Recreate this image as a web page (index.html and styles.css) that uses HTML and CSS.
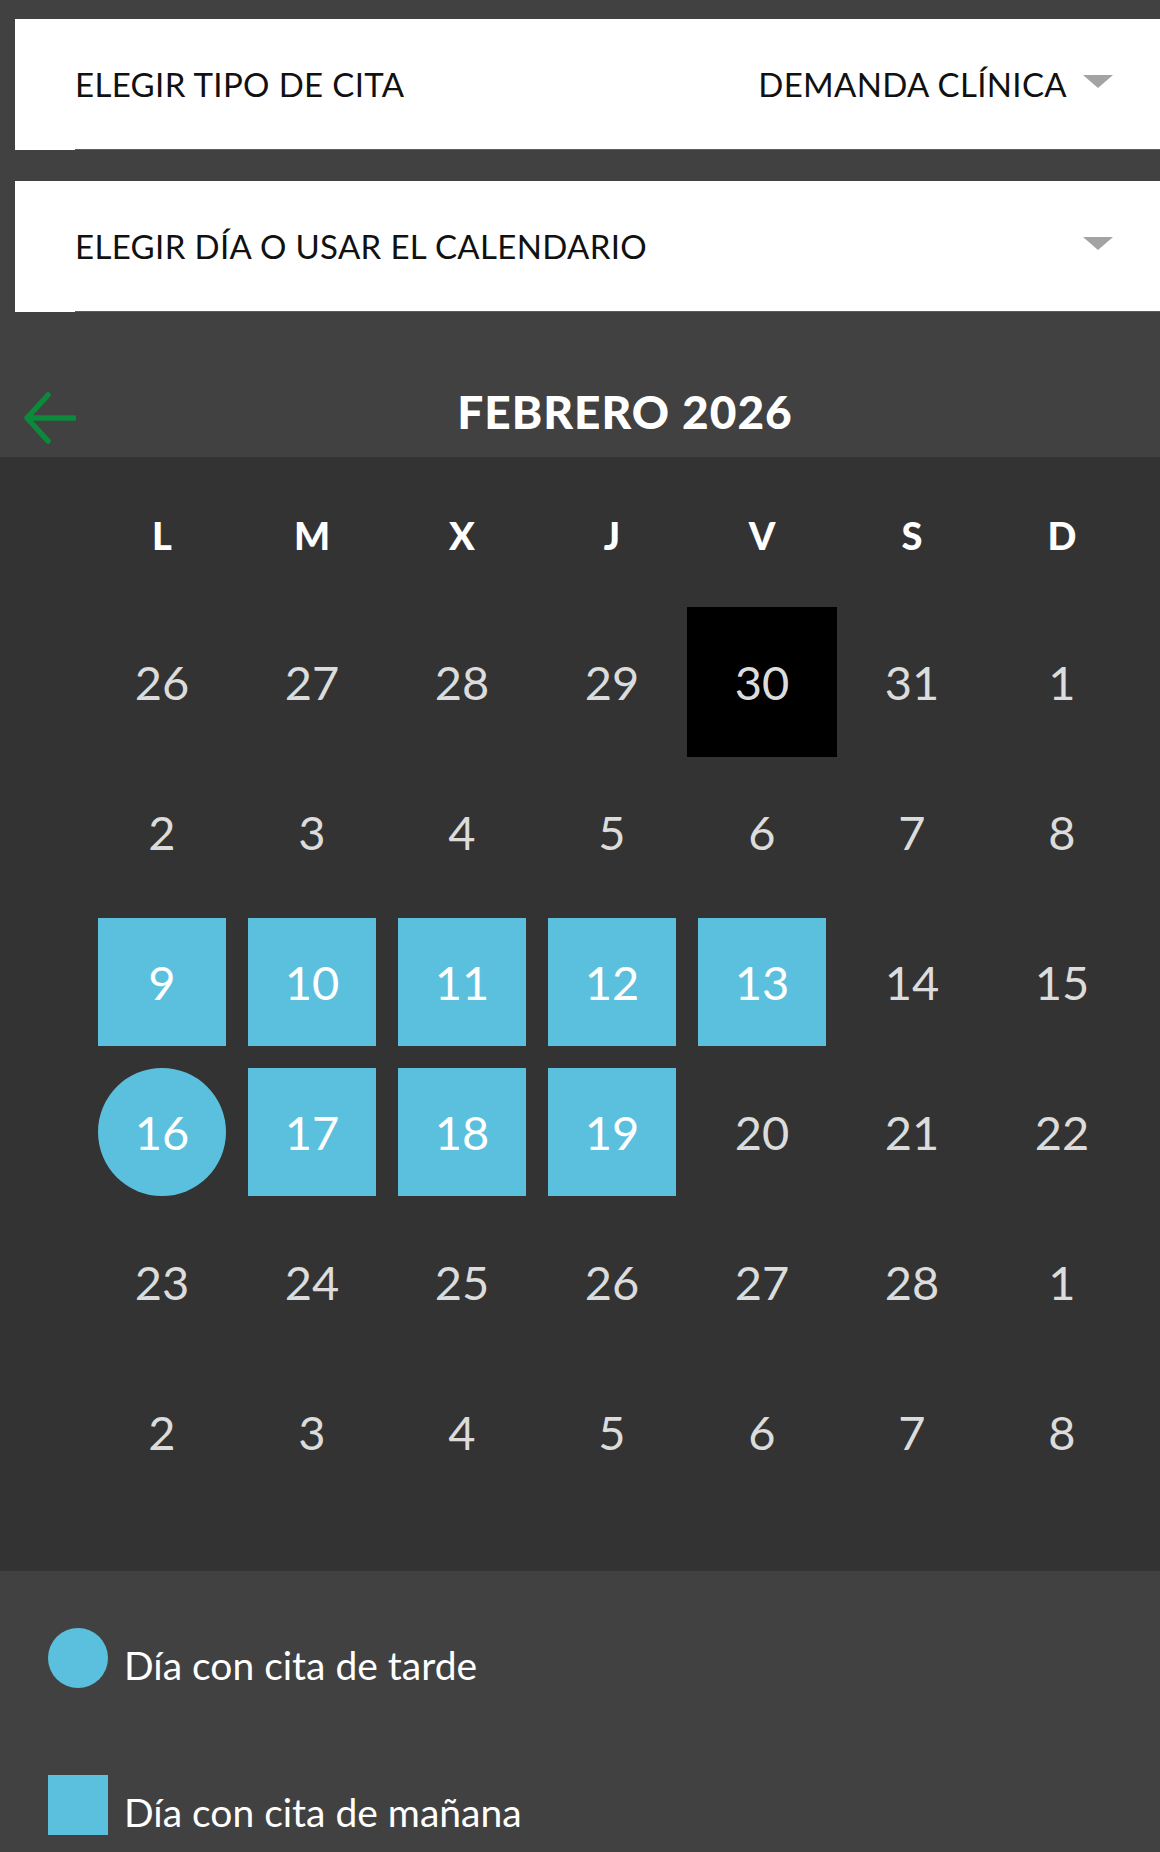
FILE: index.html
```html
<!DOCTYPE html>
<html lang="es">
<head>
    <meta charset="UTF-8">
    <meta name="viewport" content="width=device-width, initial-scale=1.0">
    <title>Pedir cita</title>
    <link rel="stylesheet" href="styles.css">
</head>
<body>
    <!-- Selectors -->
    <div class="select-card">
        <div class="select-inner">
            <span class="select-label">ELEGIR TIPO DE CITA</span>
            <span class="select-value">DEMANDA CLÍNICA</span>
            <span class="caret"></span>
        </div>
    </div>

    <div class="select-card">
        <div class="select-inner">
            <span class="select-label">ELEGIR DÍA O USAR EL CALENDARIO</span>
            <span class="select-value"></span>
            <span class="caret"></span>
        </div>
    </div>

    <!-- Month header -->
    <div class="month-bar">
        <a class="month-prev" href="#">
            <svg width="52" height="52" viewBox="0 0 52 52">
                <path d="M24 3 L3 26 L24 49 M3 26 L50 26" fill="none" stroke="#0b8a3b" stroke-width="5.5" stroke-linecap="round" stroke-linejoin="round"/>
            </svg>
        </a>
        <h2 class="month-title">FEBRERO 2026</h2>
    </div>

    <!-- Calendar -->
    <section class="calendar">
        <div class="cal-grid">
            <div class="wd">L</div>
            <div class="wd">M</div>
            <div class="wd">X</div>
            <div class="wd">J</div>
            <div class="wd">V</div>
            <div class="wd">S</div>
            <div class="wd">D</div>

            <div class="day"><span>26</span></div>
            <div class="day"><span>27</span></div>
            <div class="day"><span>28</span></div>
            <div class="day"><span>29</span></div>
            <div class="day today"><span>30</span></div>
            <div class="day"><span>31</span></div>
            <div class="day"><span>1</span></div>

            <div class="day"><span>2</span></div>
            <div class="day"><span>3</span></div>
            <div class="day"><span>4</span></div>
            <div class="day"><span>5</span></div>
            <div class="day"><span>6</span></div>
            <div class="day"><span>7</span></div>
            <div class="day"><span>8</span></div>

            <div class="day am"><span>9</span></div>
            <div class="day am"><span>10</span></div>
            <div class="day am"><span>11</span></div>
            <div class="day am"><span>12</span></div>
            <div class="day am"><span>13</span></div>
            <div class="day"><span>14</span></div>
            <div class="day"><span>15</span></div>

            <div class="day pm"><span>16</span></div>
            <div class="day am"><span>17</span></div>
            <div class="day am"><span>18</span></div>
            <div class="day am"><span>19</span></div>
            <div class="day"><span>20</span></div>
            <div class="day"><span>21</span></div>
            <div class="day"><span>22</span></div>

            <div class="day"><span>23</span></div>
            <div class="day"><span>24</span></div>
            <div class="day"><span>25</span></div>
            <div class="day"><span>26</span></div>
            <div class="day"><span>27</span></div>
            <div class="day"><span>28</span></div>
            <div class="day"><span>1</span></div>

            <div class="day"><span>2</span></div>
            <div class="day"><span>3</span></div>
            <div class="day"><span>4</span></div>
            <div class="day"><span>5</span></div>
            <div class="day"><span>6</span></div>
            <div class="day"><span>7</span></div>
            <div class="day"><span>8</span></div>
        </div>
    </section>

    <!-- Legend -->
    <section class="legend">
        <div class="legend-item">
            <span class="dot circle"></span>
            <span>Día con cita de tarde</span>
        </div>
        <div class="legend-item">
            <span class="dot square"></span>
            <span>Día con cita de mañana</span>
        </div>
    </section>
</body>
</html>
```

FILE: styles.css
```css
/* Page */
body {
    margin: 0;
    padding: 19px 0 0 0;
    background-color: #414141;
    font-family: Lato, "Noto Sans", sans-serif;
    color: #fff;
}

/* Select cards */
.select-card {
    margin-left: 15px;
    margin-bottom: 31px;
    padding-left: 60px;
    background-color: #fff;
}

.select-card + .select-card {
    margin-bottom: 0;
}

.select-inner {
    display: flex;
    align-items: center;
    height: 130px;
    padding-right: 47px;
    border-bottom: 1px solid #5c5c5c;
    color: #111;
    font-size: 33px;
    letter-spacing: 0.35px;
}

.select-label {
    flex: 1;
}

.caret {
    width: 0;
    height: 0;
    margin-left: 16px;
    margin-top: -6px;
    border-left: 15px solid transparent;
    border-right: 15px solid transparent;
    border-top: 13px solid #a3a3a3;
}

/* Month header */
.month-bar {
    display: flex;
    align-items: center;
    height: 145px;
    padding-top: 54px;
    box-sizing: border-box;
}

.month-prev {
    display: flex;
    width: 90px;
    padding-left: 24px;
    padding-top: 12px;
    box-sizing: border-box;
}

.month-title {
    flex: 1;
    margin: 0;
    text-align: center;
    font-size: 46px;
    font-weight: 900;
    letter-spacing: 1px;
    line-height: 1;
}

/* Calendar grid */
.calendar {
    background-color: #333;
    padding: 0 0 64px 87px;
}

.cal-grid {
    display: grid;
    grid-template-columns: repeat(7, 150px);
    grid-auto-rows: 150px;
}

.wd {
    display: flex;
    align-items: center;
    justify-content: center;
    padding-top: 5px;
    font-size: 38px;
    font-weight: 900;
}

.day {
    display: flex;
    align-items: center;
    justify-content: center;
    font-size: 47px;
    color: #dcdcdc;
}

.day span {
    display: flex;
    align-items: center;
    justify-content: center;
    width: 128px;
    height: 128px;
}

.day.today {
    background-color: #000;
}

.day.am span,
.day.pm span {
    background-color: #5bc0de;
    color: #fff;
}

.day.pm span {
    border-radius: 50%;
}

/* Legend */
.legend {
    padding: 57px 0 60px 48px;
}

.legend-item {
    display: flex;
    align-items: flex-end;
    gap: 16px;
    margin-bottom: 87px;
    font-size: 39px;
}

.dot {
    width: 60px;
    height: 60px;
    background-color: #5bc0de;
}

.dot.circle {
    border-radius: 50%;
}
```
